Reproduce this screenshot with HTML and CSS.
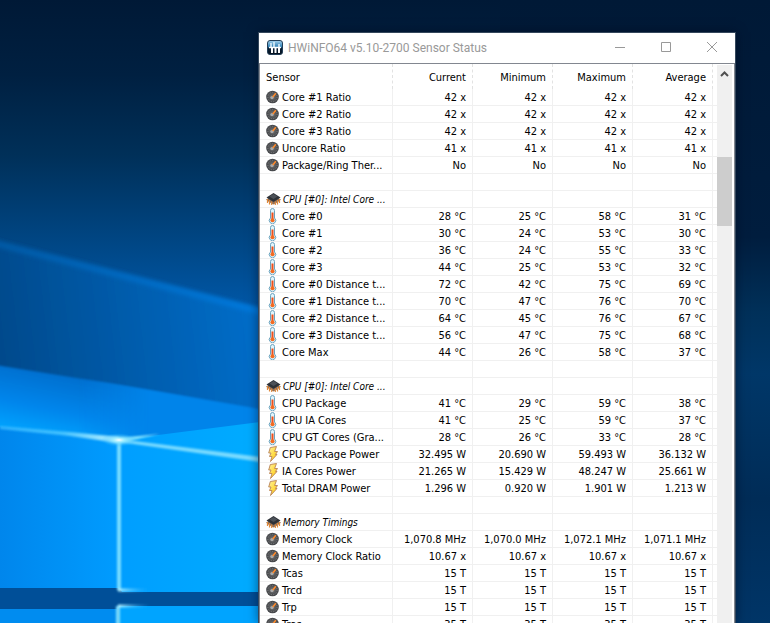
FILE: index.html
```html
<!DOCTYPE html>
<html lang="en">
<head>
<meta charset="utf-8">
<title>HWiNFO64 v5.10-2700 Sensor Status</title>
<link rel="stylesheet" href="styles.css">
</head>
<body>
<svg class="defs" aria-hidden="true">
  <defs>
    <radialGradient id="dial" cx=".5" cy=".5" r=".5"><stop offset="0" stop-color="#777"/><stop offset=".7" stop-color="#4c4e51"/><stop offset="1" stop-color="#46484b"/></radialGradient>
    <linearGradient id="flash" x2="1" y2="1"><stop offset="0" stop-color="#fff3a0"/><stop offset=".6" stop-color="#ffd93b"/><stop offset="1" stop-color="#f0a020"/></linearGradient>
    <linearGradient id="logo" x2="0" y2="1"><stop offset="0" stop-color="#a8d4ee"/><stop offset=".45" stop-color="#2f7fb4"/><stop offset=".55" stop-color="#0a2036"/><stop offset="1" stop-color="#04101e"/></linearGradient>
  </defs>
  <symbol id="gauge" viewBox="0 0 14 16">
    <circle cx="6.500" cy="8" r="6.300" fill="url(#dial)"/>
    <circle cx="6.500" cy="8" r="4.600" fill="none" stroke="#858585" stroke-dasharray="1 1.600" stroke-width="1"/>
    <circle cx="6" cy="8.600" r="1.700" fill="#aaa"/>
    <path d="M6.800 8 9.800 4.300" stroke="#ff8a2b" stroke-width="1.600"/>
  </symbol>
  <symbol id="thermo" viewBox="0 0 14 16">
    <path d="M4.500 2.500a2 2 0 0 1 4 0V10a3.200 3.200 0 1 1-4 0z" fill="#dff3fb" stroke="#6ba3be"/>
    <path d="M6.500 4.500V12" stroke="#f0501c" stroke-width="2"/>
    <circle cx="6.500" cy="12.300" r="2" fill="#f36b21"/>
  </symbol>
  <symbol id="chip" viewBox="0 0 15 16">
    <path d="M0 8.500 3 7 7.500 10.500 12 7l3 1.500-3 2.500-4.500 2.500L3 11z" fill="#8d6e58"/>
    <path d="M1.500 8v4M3.500 9v4.500M5.700 10.500v3.500M9.300 10.500v3.500M11.500 9v4.500M13.500 8v4" stroke="#e08a3c" stroke-width="1.200"/>
    <path d="M7.500 2 14.500 6.500 7.500 11 .500 6.500z" fill="#2e3238"/>
    <path d="M7.500 3 11.500 5.500 7.500 8 3.500 5.500z" fill="#4c5158"/>
  </symbol>
  <symbol id="bolt" viewBox="0 0 14 16">
    <path d="M4.300 1.500 10.500.5 8.600 5.500H11.500L9.500 8.500H11L4.500 15.500 6 10.500H3.500L5 7H2.700z" fill="url(#flash)" stroke="#b98258" stroke-width=".9" stroke-linejoin="round"/>
  </symbol>
</svg>

<svg class="wallpaper" viewBox="0 0 770 623" preserveAspectRatio="xMinYMin slice" aria-hidden="true">
  <defs>
    <linearGradient id="sky" x2="0" y2="1"><stop offset="0" stop-color="#001936"/><stop offset=".12" stop-color="#002041"/><stop offset=".25" stop-color="#003059"/><stop offset=".4" stop-color="#004888"/><stop offset=".5" stop-color="#0058a8"/></linearGradient>
    <linearGradient id="right" x2="0" y2="1"><stop offset="0" stop-color="#001936"/><stop offset=".38" stop-color="#001d3e"/><stop offset=".5" stop-color="#003059"/><stop offset=".6" stop-color="#003768"/><stop offset=".8" stop-color="#002c57"/><stop offset="1" stop-color="#003567"/></linearGradient>
    <linearGradient id="band" gradientUnits="userSpaceOnUse" x1="0" y1="340" x2="260" y2="310"><stop offset="0" stop-color="#004a8c"/><stop offset=".5" stop-color="#005cac"/><stop offset="1" stop-color="#006eca"/></linearGradient>
    <linearGradient id="edge" gradientUnits="userSpaceOnUse" x1="0" y1="0" x2="260" y2="0"><stop offset="0" stop-color="#005aa6"/><stop offset="1" stop-color="#007ade"/></linearGradient>
    <linearGradient id="beam" gradientUnits="userSpaceOnUse" x1="60" y1="376" x2="48" y2="438"><stop offset="0" stop-color="#0070d0"/><stop offset=".55" stop-color="#0086ec"/><stop offset="1" stop-color="#00a4ff"/></linearGradient>
    <linearGradient id="wedge" gradientUnits="userSpaceOnUse" x1="80" y1="0" x2="150" y2="0"><stop offset="0" stop-color="#0084ea" stop-opacity="0"/><stop offset="1" stop-color="#0084ea"/></linearGradient>
    <linearGradient id="paneA" x2="1"><stop offset="0" stop-color="#0086ec"/><stop offset="1" stop-color="#009cff"/></linearGradient>
    <linearGradient id="paneB" x2="1"><stop offset="0" stop-color="#009eff"/><stop offset="1" stop-color="#00acff"/></linearGradient>
    <linearGradient id="ray" gradientUnits="userSpaceOnUse" x1="0" y1="0" x2="120" y2="0"><stop offset="0" stop-color="#2fb4ff"/><stop offset=".5" stop-color="#40c0ff"/><stop offset="1" stop-color="#c0f4ff"/></linearGradient>
    <linearGradient id="fade" gradientUnits="userSpaceOnUse" x1="118" y1="0" x2="150" y2="0"><stop offset="0" stop-color="#b8f4ff"/><stop offset="1" stop-color="#20b0ff" stop-opacity="0"/></linearGradient>
    <radialGradient id="glow"><stop offset="0" stop-color="#fff"/><stop offset=".3" stop-color="#a0efff" stop-opacity=".8"/><stop offset="1" stop-color="#20b0ff" stop-opacity="0"/></radialGradient>
    <filter id="soft" x="-10%" y="-10%" width="120%" height="120%"><feGaussianBlur stdDeviation="2"/></filter>
    <filter id="fine" filterUnits="userSpaceOnUse" x="-10" y="350" width="300" height="280"><feGaussianBlur stdDeviation=".8"/></filter>
  </defs>
  <rect width="770" height="623" fill="url(#sky)"/>
  <rect x="500" width="270" height="623" fill="url(#right)"/>
  <path d="M-10 239 270 311V430H-10z" fill="url(#band)" filter="url(#soft)"/>
  <path d="M-10 242 270 314" stroke="url(#edge)" stroke-width="6" filter="url(#soft)"/>
  <path d="M-10 364 120 385 270 411V470H-10z" fill="url(#beam)" filter="url(#fine)"/>
  <path d="M80 378 120 385 270 411V426L120 440 80 432z" fill="url(#wedge)" filter="url(#fine)"/>
  <path d="M0 427 119 440V588H0z" fill="url(#paneA)"/>
  <path d="M119 440 260 422V592H119z" fill="url(#paneB)"/>
  <path d="M0 588H119L122 592H260V606H119L117 609H0z" fill="#004f98"/>
  <path d="M0 609H117V623H0z" fill="#008cf0"/>
  <path d="M119 606H260V623H119z" fill="#00a4ff"/>
  <g filter="url(#fine)">
    <path d="M0 426 70 432 119 437V443L70 436 0 429z" fill="url(#ray)"/>
    <path d="M119 439 260 457V462L119 442z" fill="#78daff"/>
    <path d="M119 438 160 434 119 443z" fill="#8ce8ff"/>
    <path d="M119 440V590M118 606V630" stroke="#78dcff" stroke-width="4"/>
    <path d="M118 590H150M118 606H150" stroke="url(#fade)" stroke-width="3"/>
  </g>
  <ellipse cx="119" cy="440" rx="18" ry="7" fill="url(#glow)"/>
</svg>

<main class="window">
  <header class="titlebar">
    <svg class="logo" viewBox="0 0 16 16" aria-hidden="true">
      <rect x=".5" y=".5" width="15" height="14" rx="2.500" fill="url(#logo)" stroke="#243f57"/>
      <path d="M4 3v4M7 2v5M12 4v3" stroke="#e4f3fb" stroke-width="1.500"/>
      <path d="M2 7.500H14" stroke="#fff" stroke-width="1.500"/>
      <path d="M5 8v5M8.500 8v5M12 8v5" stroke="#fff" stroke-width="2"/>
    </svg>
    <h1>HWiNFO64 v5.10-2700 Sensor Status</h1>
    <button type="button" aria-label="Minimize"><svg viewBox="0 0 12 12"><path d="M1 6.500H11"/></svg></button>
    <button type="button" aria-label="Maximize"><svg viewBox="0 0 12 12"><path d="M1.500 1.500H10.500V10.500H1.500z"/></svg></button>
    <button type="button" aria-label="Close"><svg viewBox="0 0 12 12"><path d="M1 1 11 11M11 1 1 11"/></svg></button>
  </header>
  <div class="content">
    <div class="list">
    <table>
      <colgroup><col class="name"><col class="value"><col class="value"><col class="value"><col class="value"><col></colgroup>
      <thead><tr><th>Sensor</th><th>Current</th><th>Minimum</th><th>Maximum</th><th>Average</th><th></th></tr></thead>
      <tbody>
        <tr><td><svg><use href="#gauge"/></svg>Core #1 Ratio</td><td>42 x</td><td>42 x</td><td>42 x</td><td>42 x</td><td></td></tr>
        <tr><td><svg><use href="#gauge"/></svg>Core #2 Ratio</td><td>42 x</td><td>42 x</td><td>42 x</td><td>42 x</td><td></td></tr>
        <tr><td><svg><use href="#gauge"/></svg>Core #3 Ratio</td><td>42 x</td><td>42 x</td><td>42 x</td><td>42 x</td><td></td></tr>
        <tr><td><svg><use href="#gauge"/></svg>Uncore Ratio</td><td>41 x</td><td>41 x</td><td>41 x</td><td>41 x</td><td></td></tr>
        <tr><td><svg><use href="#gauge"/></svg>Package/Ring Ther...</td><td>No</td><td>No</td><td>No</td><td>No</td><td></td></tr>
        <tr><td></td><td></td><td></td><td></td><td></td><td></td></tr>
        <tr class="group"><td><svg><use href="#chip"/></svg>CPU [#0]: Intel Core ...</td><td></td><td></td><td></td><td></td><td></td></tr>
        <tr><td><svg><use href="#thermo"/></svg>Core #0</td><td>28 °C</td><td>25 °C</td><td>58 °C</td><td>31 °C</td><td></td></tr>
        <tr><td><svg><use href="#thermo"/></svg>Core #1</td><td>30 °C</td><td>24 °C</td><td>53 °C</td><td>30 °C</td><td></td></tr>
        <tr><td><svg><use href="#thermo"/></svg>Core #2</td><td>36 °C</td><td>24 °C</td><td>55 °C</td><td>33 °C</td><td></td></tr>
        <tr><td><svg><use href="#thermo"/></svg>Core #3</td><td>44 °C</td><td>25 °C</td><td>53 °C</td><td>32 °C</td><td></td></tr>
        <tr><td><svg><use href="#thermo"/></svg>Core #0 Distance t...</td><td>72 °C</td><td>42 °C</td><td>75 °C</td><td>69 °C</td><td></td></tr>
        <tr><td><svg><use href="#thermo"/></svg>Core #1 Distance t...</td><td>70 °C</td><td>47 °C</td><td>76 °C</td><td>70 °C</td><td></td></tr>
        <tr><td><svg><use href="#thermo"/></svg>Core #2 Distance t...</td><td>64 °C</td><td>45 °C</td><td>76 °C</td><td>67 °C</td><td></td></tr>
        <tr><td><svg><use href="#thermo"/></svg>Core #3 Distance t...</td><td>56 °C</td><td>47 °C</td><td>75 °C</td><td>68 °C</td><td></td></tr>
        <tr><td><svg><use href="#thermo"/></svg>Core Max</td><td>44 °C</td><td>26 °C</td><td>58 °C</td><td>37 °C</td><td></td></tr>
        <tr><td></td><td></td><td></td><td></td><td></td><td></td></tr>
        <tr class="group"><td><svg><use href="#chip"/></svg>CPU [#0]: Intel Core ...</td><td></td><td></td><td></td><td></td><td></td></tr>
        <tr><td><svg><use href="#thermo"/></svg>CPU Package</td><td>41 °C</td><td>29 °C</td><td>59 °C</td><td>38 °C</td><td></td></tr>
        <tr><td><svg><use href="#thermo"/></svg>CPU IA Cores</td><td>41 °C</td><td>25 °C</td><td>59 °C</td><td>37 °C</td><td></td></tr>
        <tr><td><svg><use href="#thermo"/></svg>CPU GT Cores (Gra...</td><td>28 °C</td><td>26 °C</td><td>33 °C</td><td>28 °C</td><td></td></tr>
        <tr><td><svg><use href="#bolt"/></svg>CPU Package Power</td><td>32.495 W</td><td>20.690 W</td><td>59.493 W</td><td>36.132 W</td><td></td></tr>
        <tr><td><svg><use href="#bolt"/></svg>IA Cores Power</td><td>21.265 W</td><td>15.429 W</td><td>48.247 W</td><td>25.661 W</td><td></td></tr>
        <tr><td><svg><use href="#bolt"/></svg>Total DRAM Power</td><td>1.296 W</td><td>0.920 W</td><td>1.901 W</td><td>1.213 W</td><td></td></tr>
        <tr><td></td><td></td><td></td><td></td><td></td><td></td></tr>
        <tr class="group"><td><svg><use href="#chip"/></svg>Memory Timings</td><td></td><td></td><td></td><td></td><td></td></tr>
        <tr><td><svg><use href="#gauge"/></svg>Memory Clock</td><td>1,070.8 MHz</td><td>1,070.0 MHz</td><td>1,072.1 MHz</td><td>1,071.1 MHz</td><td></td></tr>
        <tr><td><svg><use href="#gauge"/></svg>Memory Clock Ratio</td><td>10.67 x</td><td>10.67 x</td><td>10.67 x</td><td>10.67 x</td><td></td></tr>
        <tr><td><svg><use href="#gauge"/></svg>Tcas</td><td>15 T</td><td>15 T</td><td>15 T</td><td>15 T</td><td></td></tr>
        <tr><td><svg><use href="#gauge"/></svg>Trcd</td><td>15 T</td><td>15 T</td><td>15 T</td><td>15 T</td><td></td></tr>
        <tr><td><svg><use href="#gauge"/></svg>Trp</td><td>15 T</td><td>15 T</td><td>15 T</td><td>15 T</td><td></td></tr>
        <tr><td><svg><use href="#gauge"/></svg>Tras</td><td>35 T</td><td>35 T</td><td>35 T</td><td>35 T</td><td></td></tr>
      </tbody>
    </table>
    </div>
    <div class="scrollbar">
      <button type="button" aria-label="Scroll up"><svg viewBox="0 0 9 6"><path d="M1 5 4.500 1.500 8 5"/></svg></button>
      <div class="thumb"></div>
    </div>
  </div>
</main>
</body>
</html>
```
FILE: styles.css
```css
* {
  box-sizing: border-box;
}

body {
  margin: 0;
  height: 100vh;
  overflow: hidden;
  background: #001a36;
  color: #000;
  font: 11px/14px "DejaVu Sans Condensed", Tahoma, sans-serif;
}

.defs {
  position: absolute;
  width: 0;
  height: 0;
}

.wallpaper {
  position: absolute;
  inset: 0;
  width: 100%;
  height: 100%;
}

.window {
  position: absolute;
  top: 32px;
  right: 34px;
  bottom: 0;
  left: 258px;
  display: flex;
  flex-direction: column;
  overflow: hidden;
  background: #fff;
  border: solid #34475c;
  border-width: 1px 1px 0;
  box-shadow: 0 0 10px rgba(0, 10, 30, 0.5);
}

.titlebar {
  display: flex;
  flex: none;
  height: 31px;
  padding-left: 8px;
  border-bottom: 1px solid #828790;
}

.logo {
  width: 16px;
  height: 16px;
  margin: 7px 5px 0 0;
}

h1 {
  flex: 1;
  margin: 7px 0 0;
  color: #999;
  font: 12px/16px Roboto, "Segoe UI", sans-serif;
  white-space: nowrap;
}

button {
  display: flex;
  align-items: center;
  justify-content: center;
  padding: 0;
  border: 0;
  background: none;
}

.titlebar button {
  width: 46px;
  height: 28px;
}

.titlebar button svg {
  width: 12px;
  height: 12px;
  fill: none;
  stroke: #999;
}

.content {
  display: flex;
  flex: 1;
  min-height: 0;
  padding-right: 2px;
  border: solid #828790;
  border-width: 0 1px;
}

.list {
  flex: 1;
  overflow: hidden;
}

table {
  width: 100%;
  table-layout: fixed;
  border-spacing: 0;
}

.name {
  width: 133px;
}

.value {
  width: 80px;
}

th,
td {
  padding: 2px 6px 0 0;
  text-align: right;
  white-space: nowrap;
  overflow: hidden;
}

th {
  height: 25px;
  border-right: 1px dashed #e2e2e2;
  font-weight: normal;
}

td {
  height: 17px;
  border: solid #f0f0f0;
  border-width: 0 1px 1px 0;
}

th:first-child,
td:first-child {
  padding: 2px 0 0 6px;
  text-align: left;
}

th:last-child,
td:last-child {
  padding: 0;
  border-right: 0;
}

td svg {
  width: 14px;
  height: 16px;
  margin: -2px 2px 0 0;
  vertical-align: top;
}

.group td {
  font-size: 10px;
  font-style: italic;
}

.group td svg {
  width: 15px;
}

.scrollbar {
  flex: none;
  width: 15px;
  margin-top: 1px;
  background: #f0f0f0;
}

.scrollbar button {
  width: 100%;
  height: 17px;
}

.scrollbar svg {
  width: 9px;
  height: 6px;
  fill: none;
  stroke: #505050;
  stroke-width: 2;
}

.thumb {
  height: 69px;
  margin-top: 75px;
  background: #cdcdcd;
}
```
